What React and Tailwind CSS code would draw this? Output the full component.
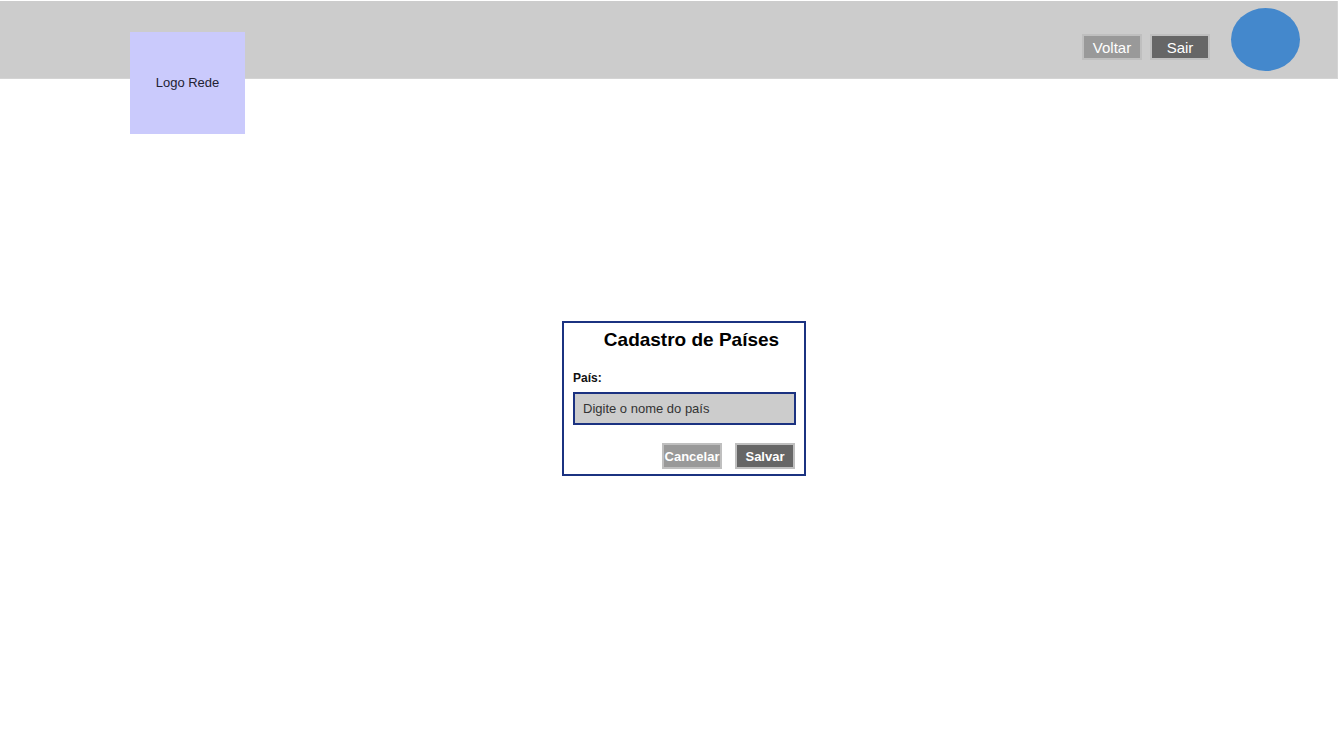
export default function App() {
  return (
    <div className="min-h-screen bg-white pt-px font-['Liberation_Sans',Arial,sans-serif] text-[#111111]">
      <header className="flex h-[78px] items-start justify-between border-r border-b border-[#d4d4d4] bg-[#cccccc] pr-[37px] pl-[130px]">
        <div className="mt-[31px] flex h-[102px] w-[115px] items-center justify-center bg-[#cacafc] text-[13px] text-[#222233]">
          Logo Rede
        </div>
        <nav className="flex items-start">
          <button
            type="button"
            className="mt-[33px] mr-2 flex h-[26px] w-[60px] items-center justify-center border-2 border-[#bfbfbf] bg-[#999999] pt-0.5 text-[15px] text-white"
          >
            Voltar
          </button>
          <button
            type="button"
            className="mt-[33px] flex h-[26px] w-[60px] items-center justify-center border-2 border-[#bfbfbf] bg-[#666666] pt-0.5 text-[15px] text-white"
          >
            Sair
          </button>
          <div className="mt-[7px] ml-[21px] h-[63px] w-[69px] rounded-[50%] bg-[#4488cc]" />
        </nav>
      </header>

      <main className="flex justify-center pt-[242px] pl-[30px]">
        <form
          className="w-[244px] border-2 border-[#1b3281] pt-[5px] pr-2 pb-[5px] pl-[9px]"
          onSubmit={(event) => event.preventDefault()}
        >
          <h1 className="pl-[14px] text-center text-[19px] leading-6 font-bold whitespace-nowrap text-black">
            Cadastro de Países
          </h1>
          <label htmlFor="pais" className="mt-[18px] block text-[12px] leading-4 font-bold">
            País:
          </label>
          <input
            id="pais"
            type="text"
            placeholder="Digite o nome do país"
            className="mt-1.5 block h-[33px] w-full border-2 border-[#1b3281] bg-[#cccccc] px-2 text-[13px] text-[#333333] placeholder:text-[#333333]"
          />
          <div className="mt-[18px] flex justify-end gap-[13px] pr-px">
            <button
              type="button"
              className="flex h-[26px] w-[60px] items-center justify-center border-2 border-[#bfbfbf] bg-[#999999] pt-0.5 text-[13px] font-bold text-white"
            >
              Cancelar
            </button>
            <button
              type="submit"
              className="flex h-[26px] w-[60px] items-center justify-center border-2 border-[#bfbfbf] bg-[#666666] pt-0.5 text-[13px] font-bold text-white"
            >
              Salvar
            </button>
          </div>
        </form>
      </main>
    </div>
  );
}
